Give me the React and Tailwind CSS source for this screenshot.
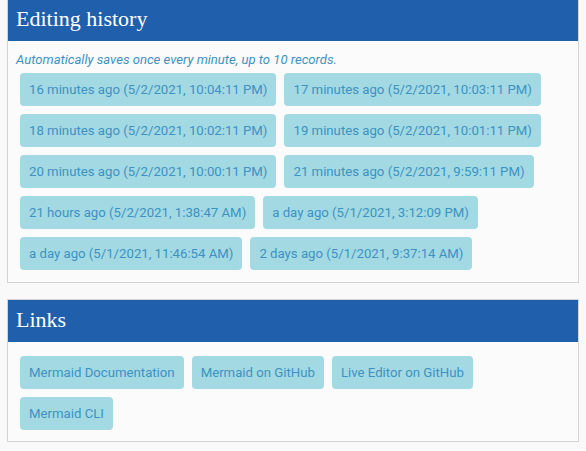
import React from 'react';

const history = [
  '16 minutes ago (5/2/2021, 10:04:11 PM)',
  '17 minutes ago (5/2/2021, 10:03:11 PM)',
  '18 minutes ago (5/2/2021, 10:02:11 PM)',
  '19 minutes ago (5/2/2021, 10:01:11 PM)',
  '20 minutes ago (5/2/2021, 10:00:11 PM)',
  '21 minutes ago (5/2/2021, 9:59:11 PM)',
  '21 hours ago (5/2/2021, 1:38:47 AM)',
  'a day ago (5/1/2021, 3:12:09 PM)',
  'a day ago (5/1/2021, 11:46:54 AM)',
  '2 days ago (5/1/2021, 9:37:14 AM)',
];

const links = ['Mermaid Documentation', 'Mermaid on GitHub', 'Live Editor on GitHub', 'Mermaid CLI'];

const Card = ({ title, children }) => (
  <div className="border border-[#d4d4d4] bg-[#fbfbfb]">
    <div className="h-[42px] bg-[#1f5fab] px-2 flex items-center">
      <h2 className="text-[22px] text-white leading-none pb-[3px]" style={{ fontFamily: '"Liberation Serif", serif' }}>
        {title}
      </h2>
    </div>
    {children}
  </div>
);

const Chip = ({ label }) => (
  <button className="h-[33px] px-[9px] rounded-[4px] bg-[#a3d9e3] text-[#3d92c2] text-[13.2px] whitespace-nowrap">
    {label}
  </button>
);

const App = () => {
  return (
    <div className="min-h-screen bg-[#f9f9f9] px-[7px] pb-2" style={{ fontFamily: 'Roboto, "Liberation Sans", sans-serif' }}>
      <div className="-mt-[2px]">
        <Card title="Editing history">
          <div className="px-2 pt-[10px] pb-[12px]">
            <p className="text-[13.1px] leading-[18px] italic text-[#3d92c2] mb-1">
              Automatically saves once every minute, up to 10 records.
            </p>
            <div className="flex flex-wrap gap-2 px-1">
              {history.map((h) => (
                <Chip key={h} label={h} />
              ))}
            </div>
          </div>
        </Card>
      </div>

      <div className="mt-[16px]">
        <Card title="Links">
          <div className="flex flex-wrap gap-2 px-3 pt-[14px] pb-[11px]">
            {links.map((l) => (
              <Chip key={l} label={l} />
            ))}
          </div>
        </Card>
      </div>
    </div>
  );
};

export default App;
